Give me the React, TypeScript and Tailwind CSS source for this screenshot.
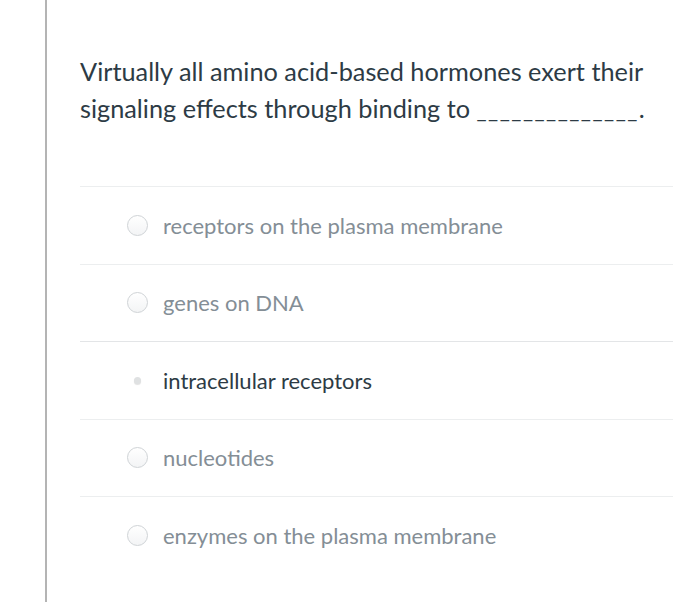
import React from 'react';

const options = [
  { label: 'receptors on the plasma membrane', selected: false },
  { label: 'genes on DNA', selected: false },
  { label: 'intracellular receptors', selected: true },
  { label: 'nucleotides', selected: false },
  { label: 'enzymes on the plasma membrane', selected: false },
];

const App: React.FC = () => {
  return (
    <div
      className="flex min-h-[602px] w-[700px] bg-white"
      style={{ fontFamily: 'Lato, "Open Sans", sans-serif' }}
    >
      {/* left rule */}
      <div className="ml-[45px] w-[2px] bg-[#b4b4b4]" />

      <div className="ml-[33px] w-[593px]">
        <p className="pt-[53px] text-[25.3px] leading-[37px] text-[#2d3b45]">
          Virtually all amino acid-based hormones exert their signaling effects through binding to{' '}
          <span className="text-[22px] tracking-[1.5px]">______________</span>.
        </p>

        <div className="mt-[58px]">
          {options.map((opt, i) => (
            <div
              key={i}
              className={`flex h-[77.5px] items-center border-t ${
                i === 2 ? 'border-[#e3e5e7]' : 'border-[#eceeef]'
              }`}
            >
              <div className="ml-[47px] flex h-[21px] w-[21px] items-center justify-center">
                {opt.selected ? (
                  <span className="h-[7px] w-[7px] rounded-full bg-[#dfe1e2] shadow-[0_1px_1px_rgba(0,0,0,0.12)]" />
                ) : (
                  <span className="h-[21px] w-[21px] rounded-full border border-[#cfd3d6] bg-gradient-to-b from-white to-[#f3f4f5]" />
                )}
              </div>
              <span
                className={`ml-[15px] text-[22px] ${
                  opt.selected ? 'text-[#2d3b45]' : 'text-[#848e96]'
                }`}
              >
                {opt.label}
              </span>
            </div>
          ))}
        </div>
      </div>
    </div>
  );
};

export default App;
